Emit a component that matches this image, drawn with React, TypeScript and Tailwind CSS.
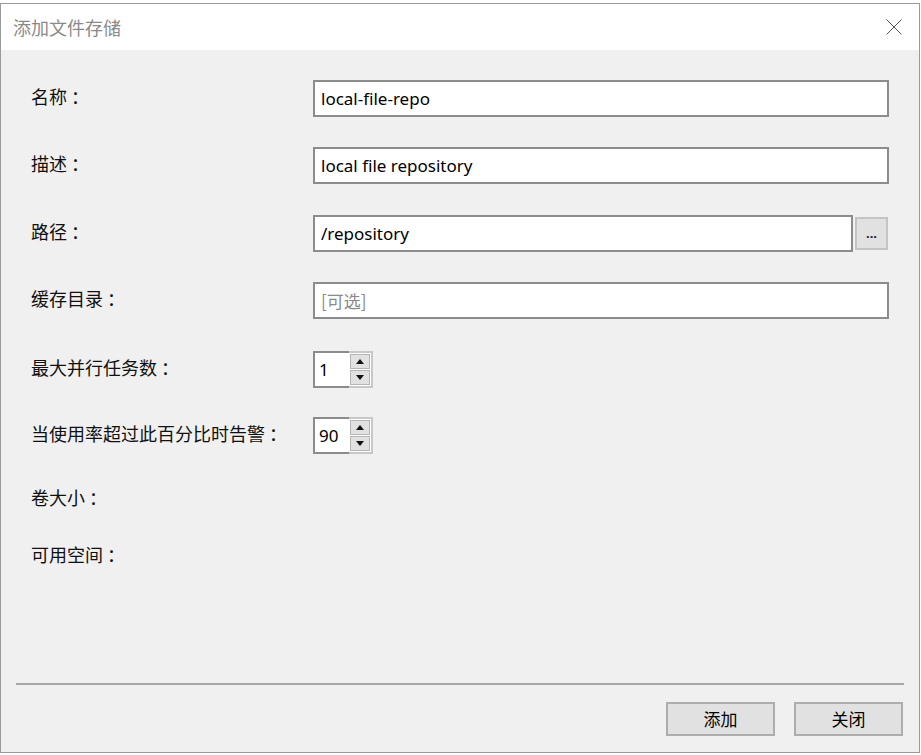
import React from "react";

const cjk = { fontFamily: '"Noto Sans CJK SC", "Noto Sans", sans-serif' };
const latin = { fontFamily: '"Noto Sans", "Noto Sans CJK SC", sans-serif' };

function Label({ text }: { text: string }) {
  return (
    <div className="w-[282px] shrink-0 pt-[4px] text-[18px] leading-[24px] text-[#111]" style={cjk}>
      {text}
      <span className="ml-[4px]">：</span>
    </div>
  );
}

function TextBox({ value, placeholder, width = "w-[576px]" }: { value?: string; placeholder?: string; width?: string }) {
  return (
    <div className={`${width} h-[37px] bg-white border-2 border-[#8c8c8c] flex items-center px-[6px]`}>
      {value ? (
        <span className="text-[17px] text-black" style={latin}>{value}</span>
      ) : (
        <span className="text-[17px] text-[#8a8a8a]" style={cjk}>{placeholder}</span>
      )}
    </div>
  );
}

function Spinner({ value }: { value: string }) {
  return (
    <div className="w-[60px] h-[37px] flex">
      <div className="flex-1 bg-white border-2 border-r-0 border-[#8c8c8c] flex items-center px-[4px]">
        <span className="text-[17px] text-black" style={latin}>{value}</span>
      </div>
      <div className="w-[24px] flex flex-col bg-white border-2 border-l-0 border-[#c8c8c8] p-[1px] gap-[1px]">
        <div className="flex-1 bg-[#e1e1e1] border border-[#b5b5b5] flex items-center justify-center">
          <svg width="8" height="5" viewBox="0 0 8 5"><path d="M0 5 L4 0 L8 5 Z" fill="#111" /></svg>
        </div>
        <div className="flex-1 bg-[#e1e1e1] border border-[#b5b5b5] flex items-center justify-center">
          <svg width="8" height="5" viewBox="0 0 8 5"><path d="M0 0 L4 5 L8 0 Z" fill="#111" /></svg>
        </div>
      </div>
    </div>
  );
}

function DialogButton({ children }: { children: React.ReactNode }) {
  return (
    <button className="w-[109px] h-[34px] bg-[#e1e1e1] border-2 border-[#adadad] text-[17px] text-black flex items-center justify-center" style={cjk}>
      {children}
    </button>
  );
}

export default function App() {
  return (
    <div className="w-[921px] h-[755px] bg-white pt-[3px]">
      <div className="w-[920px] h-[750px] border border-[#9a9a9a] flex flex-col bg-[#f0f0f0]">
        <div className="h-[46px] bg-white flex items-center justify-between pl-[12px] pr-[17px] shrink-0">
          <span className="text-[18px] text-[#8a8a8a]" style={cjk}>添加文件存储</span>
          <svg width="16" height="16" viewBox="0 0 16 16">
            <path d="M0.5 0.5 L15.5 15.5 M15.5 0.5 L0.5 15.5" stroke="#555" strokeWidth="1" fill="none" />
          </svg>
        </div>

        <div className="flex flex-col pl-[30px] pt-[30px]">
          <div className="flex items-start">
            <Label text="名称" />
            <TextBox value="local-file-repo" />
          </div>
          <div className="flex items-start mt-[30px]">
            <Label text="描述" />
            <TextBox value="local file repository" />
          </div>
          <div className="flex items-start mt-[31px]">
            <Label text="路径" />
            <TextBox value="/repository" width="w-[540px]" />
            <button className="ml-[2px] mt-[2px] w-[33px] h-[33px] bg-[#e1e1e1] border-2 border-[#c4c4c4] flex items-center justify-center">
              <span className="text-[13px] font-bold text-[#1a1a3a] leading-none" style={latin}>...</span>
            </button>
          </div>
          <div className="flex items-start mt-[30px]">
            <Label text="缓存目录" />
            <TextBox placeholder="[可选]" />
          </div>
          <div className="flex items-start mt-[32px]">
            <Label text="最大并行任务数" />
            <Spinner value="1" />
          </div>
          <div className="flex items-start mt-[29px]">
            <Label text="当使用率超过此百分比时告警" />
            <Spinner value="90" />
          </div>
          <div className="flex items-start mt-[27px] h-[37px]">
            <Label text="卷大小" />
          </div>
          <div className="flex items-start mt-[20px] h-[37px]">
            <Label text="可用空间" />
          </div>
        </div>

        <div className="mt-auto px-[15px] pb-[16px]">
          <div className="h-[2px] bg-[#a9a9a9]" />
          <div className="flex justify-end gap-[19px] mt-[17px] mr-[1px]">
            <DialogButton>添加</DialogButton>
            <DialogButton>关闭</DialogButton>
          </div>
        </div>
      </div>
    </div>
  );
}
